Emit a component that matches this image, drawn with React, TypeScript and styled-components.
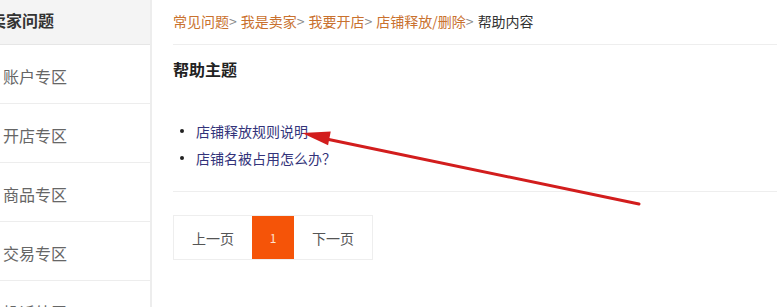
import React from "react";
import styled, { createGlobalStyle } from "styled-components";

const Global = createGlobalStyle`
  html, body { margin: 0; padding: 0; background: #fff; }
  body {
    font-family: "Noto Sans CJK SC", "Liberation Sans", sans-serif;
    overflow: hidden;
  }
`;

const Page = styled.div`
  position: relative;
  display: flex;
  width: 777px;
  height: 307px;
  overflow: hidden;
  background: #fff;
`;

const Sidebar = styled.aside`
  width: 150px;
  flex-shrink: 0;
  border-right: 2px solid #ededed;
  display: flex;
  flex-direction: column;
`;

const SideHeader = styled.div`
  height: 45px;
  flex-shrink: 0;
  background: #f4f4f4;
  border-bottom: 1px solid #e6e6e6;
  display: flex;
  align-items: center;
  padding-bottom: 4px;
  box-sizing: border-box;
`;

const SideTitle = styled.span`
  margin-left: -10px;
  font-size: 16px;
  font-weight: 700;
  color: #333;
  white-space: nowrap;
`;

const SideItem = styled.div`
  height: 59px;
  flex-shrink: 0;
  box-sizing: border-box;
  border-bottom: 1px solid #ededed;
  display: flex;
  align-items: center;
  padding: 4px 0 0 3px;
  font-size: 16px;
  color: #666;
  white-space: nowrap;
`;

const Main = styled.main`
  flex: 1;
  padding-left: 21px;
  display: flex;
  flex-direction: column;
`;

const Breadcrumb = styled.nav`
  height: 45px;
  box-sizing: border-box;
  border-bottom: 1px solid #eeeeee;
  display: flex;
  align-items: center;
  padding-bottom: 2px;
  font-size: 14px;
  white-space: nowrap;
`;

const Crumb = styled.span<{ $current?: boolean }>`
  color: ${(p) => (p.$current ? "#333" : "#c9712e")};
`;

const Sep = styled.span`
  color: #888;
  margin-right: 4px;
`;

const Title = styled.h2`
  margin: 16px 0 0;
  font-size: 16px;
  line-height: 16px;
  font-weight: 700;
  color: #222;
`;

const List = styled.ul`
  list-style: none;
  margin: 40px 0 0;
  padding: 0 0 20px;
  border-bottom: 1px solid #eeeeee;
`;

const Item = styled.li`
  display: flex;
  align-items: center;
  height: 27px;
  font-size: 14px;
  color: #33337a;
`;

const Bullet = styled.span`
  width: 4px;
  height: 4px;
  border-radius: 50%;
  background: #222;
  margin: 0 12px 0 7px;
  flex-shrink: 0;
`;

const Pager = styled.div`
  margin-top: 23px;
  align-self: flex-start;
  display: flex;
  border: 1px solid #eeeeee;
  height: 45px;
  box-sizing: border-box;
`;

const PageCell = styled.div<{ $active?: boolean }>`
  width: ${(p) => (p.$active ? "42px" : "78px")};
  display: flex;
  align-items: center;
  justify-content: center;
  font-size: ${(p) => (p.$active ? "12px" : "14px")};
  color: ${(p) => (p.$active ? "#ffe3d0" : "#555")};
  background: ${(p) => (p.$active ? "#f55408" : "transparent")};
`;

const ArrowLayer = styled.svg`
  position: absolute;
  left: 0;
  top: 0;
  pointer-events: none;
`;

const menu = ["账户专区", "开店专区", "商品专区", "交易专区", "投诉处罚"];

export default function App() {
  return (
    <>
      <Global />
      <Page>
        <Sidebar>
          <SideHeader>
            <SideTitle>卖家问题</SideTitle>
          </SideHeader>
          {menu.map((m) => (
            <SideItem key={m}>{m}</SideItem>
          ))}
        </Sidebar>
        <Main>
          <Breadcrumb>
            <Crumb>常见问题</Crumb>
            <Sep>&gt;</Sep>
            <Crumb>我是卖家</Crumb>
            <Sep>&gt;</Sep>
            <Crumb>我要开店</Crumb>
            <Sep>&gt;</Sep>
            <Crumb>店铺释放/删除</Crumb>
            <Sep>&gt;</Sep>
            <Crumb $current>帮助内容</Crumb>
          </Breadcrumb>
          <Title>帮助主题</Title>
          <List>
            <Item>
              <Bullet />
              店铺释放规则说明
            </Item>
            <Item>
              <Bullet />
              店铺名被占用怎么办？
            </Item>
          </List>
          <Pager>
            <PageCell>上一页</PageCell>
            <PageCell $active>1</PageCell>
            <PageCell>下一页</PageCell>
          </Pager>
        </Main>
        <ArrowLayer width="777" height="307" viewBox="0 0 777 307">
          <line
            x1="324"
            y1="138.5"
            x2="639"
            y2="204"
            stroke="#d21d1d"
            strokeWidth="3"
            strokeLinecap="round"
          />
          <polygon points="302,133 330.7,131.4 328.1,145.2" fill="#d21d1d" />
        </ArrowLayer>
      </Page>
    </>
  );
}
